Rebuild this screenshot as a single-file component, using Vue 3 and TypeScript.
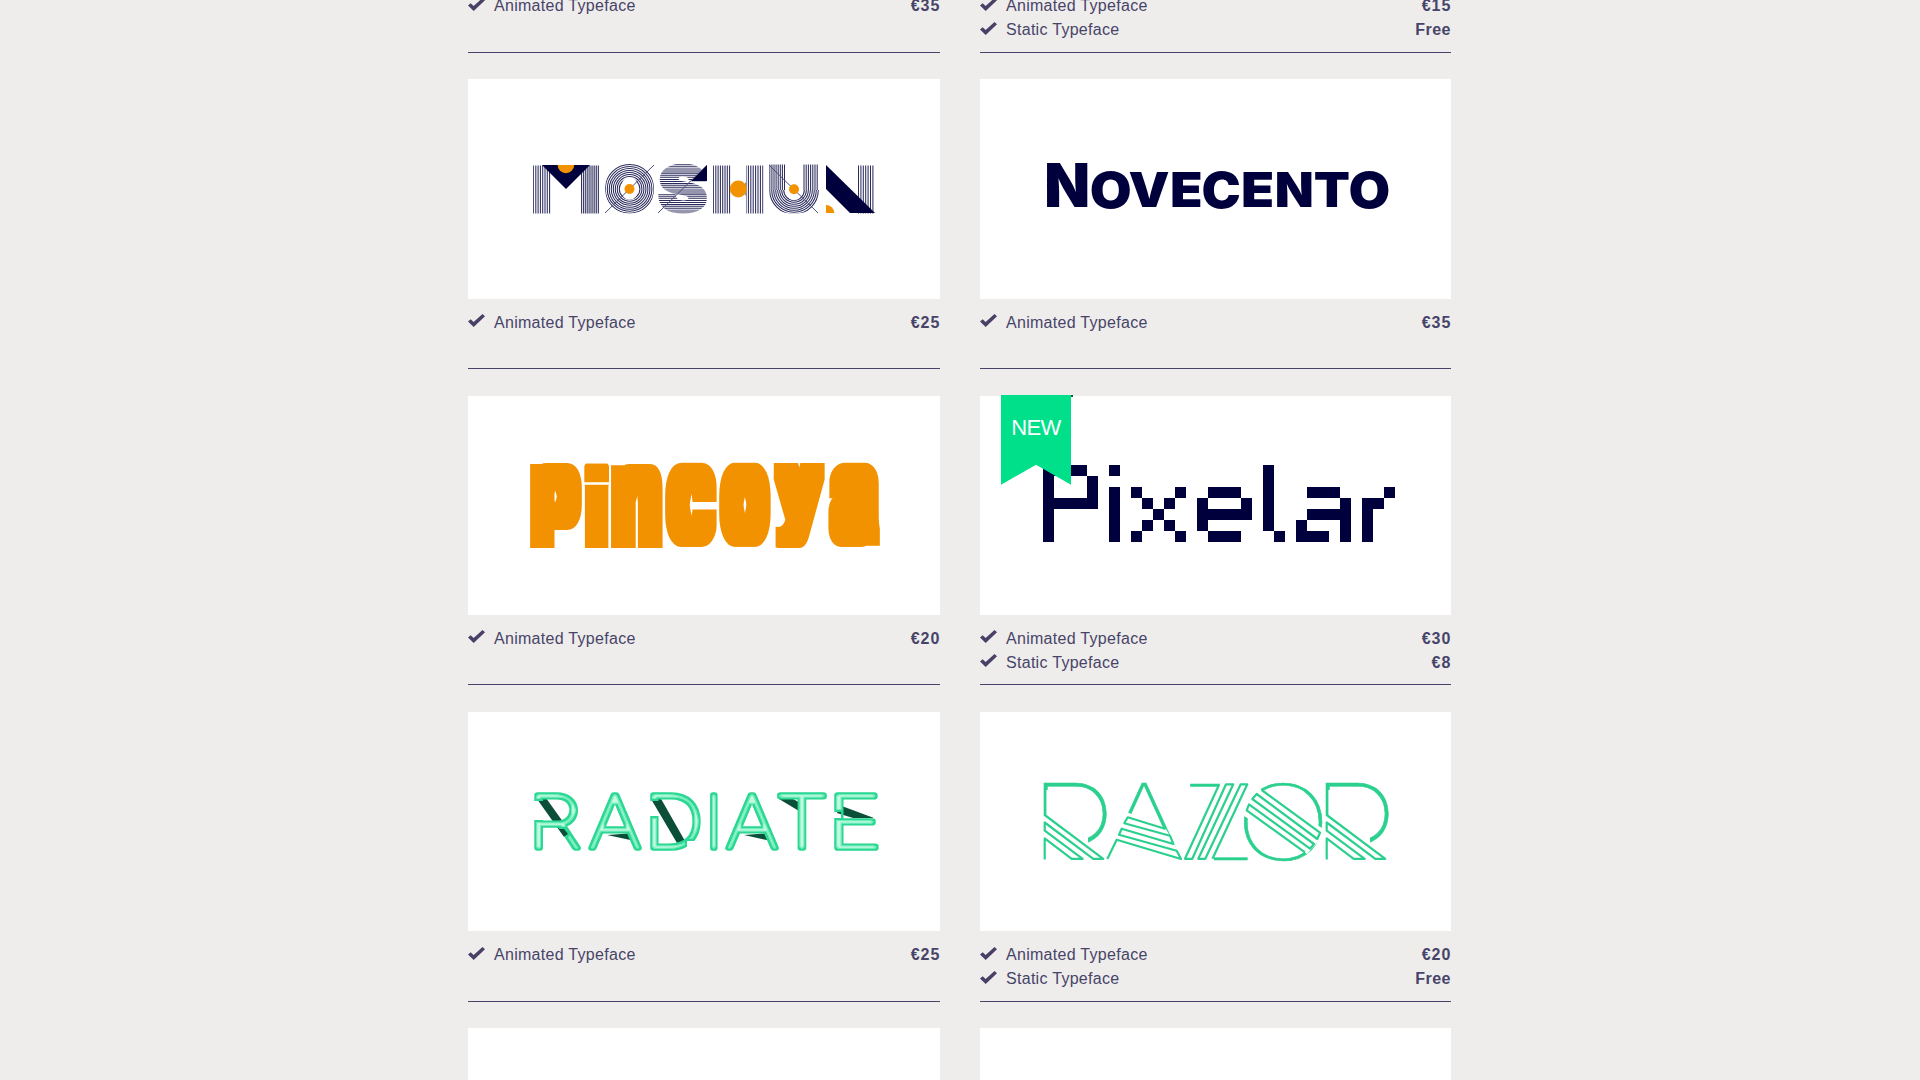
<script setup lang="ts">
interface Offer { label: string; price: string }
interface Card { id: string; name: string; view: string; isNew?: boolean; offers: Offer[] }
interface Glyph { ch: string; x: number; y: number; w: number; h: number }
interface Fitted { ch: string; transform: string; x: number; style: Record<string, string> }

const animated = (price: string): Offer => ({ label: 'Animated Typeface', price })
const still = (price: string): Offer => ({ label: 'Static Typeface', price })

const cards: Card[] = [
  { id: 'a', name: '', view: '', offers: [animated('€35')] },
  { id: 'b', name: '', view: '', offers: [animated('€15'), still('Free')] },
  { id: 'moshun', name: 'Moshun', view: '468 79 472 220', offers: [animated('€25')] },
  { id: 'novecento', name: 'Novecento', view: '980 79 472 220', offers: [animated('€35')] },
  { id: 'pincoya', name: 'Pincoya', view: '468 396 472 220', offers: [animated('€20')] },
  { id: 'pixelar', name: 'Pixelar', view: '980 396 472 220', isNew: true, offers: [animated('€30'), still('€8')] },
  { id: 'radiate', name: 'Radiate', view: '468 712 472 220', offers: [animated('€25')] },
  { id: 'razor', name: 'Razor', view: '980 712 472 220', offers: [animated('€20'), still('Free')] },
  { id: 'c', name: '', view: '', offers: [] },
  { id: 'd', name: '', view: '', offers: [] },
]

const ctx = document.createElement('canvas').getContext('2d')!

// Sizes one character so that its ink, stroke included, fills the given box.
function fit(g: Glyph, family: string, weight: number, stroke = 0): Fitted {
  ctx.font = `${weight} 200px "${family}"`
  const m = ctx.measureText(g.ch)
  const tall = m.actualBoundingBoxAscent + m.actualBoundingBoxDescent
  const k = (g.h - stroke) / tall
  const ink = (m.actualBoundingBoxLeft + m.actualBoundingBoxRight) * k
  const sx = g.w / (ink + stroke)
  const baseline = g.y + stroke / 2 + m.actualBoundingBoxAscent * k
  return {
    ch: g.ch,
    transform: `translate(${g.x} ${baseline}) scale(${sx} 1)`,
    x: m.actualBoundingBoxLeft * k + stroke / 2,
    style: { fontFamily: `"${family}", sans-serif`, fontWeight: String(weight), fontSize: `${200 * k}px` },
  }
}

function word(chars: string, y: number, h: number, spans: number[][], font: string, weight: number, stroke = 0): Fitted[] {
  return [...chars].map((ch, i) => {
    const [x0, x1, y0 = y, h0 = h] = spans[i]
    return fit({ ch, x: x0, y: y0, w: x1 - x0, h: h0 }, font, weight, stroke)
  })
}

const moshun = word('MOSHUN', 164.7, 48.3,
  [[533, 599], [605, 654.3, 164, 49.6], [658, 707, 164, 49], [713, 763.7], [769, 819], [826, 875]], 'Inter', 900, 3)

const novecento = word('NOVECENTO', 172, 35.3,
  [[1047, 1087.5, 163.2, 44.2], [1091.3, 1130, 171, 37.3], [1129.5, 1168.5], [1172.3, 1200.5], [1203, 1239.3, 171, 37.3],
    [1243.3, 1272], [1277, 1311.5], [1315, 1348.5], [1350, 1388.5, 171, 37.3]], 'Inter', 900)

// The boxes leave room for the 10 by 8 spread that the "fatten" filter adds.
const pincoya = word('pincoya', 471, 68.5,
  [[540, 572], [594, 599], [621, 653], [675, 707], [729, 761], [783.5, 815], [838, 870]], 'Roboto', 300)

const pixelar: Fitted[] = [
  fit({ ch: 'P', x: 1042, y: 458, w: 55, h: 84 }, 'Liberation Sans', 700),
  fit({ ch: 'i', x: 1108, y: 465, w: 11, h: 77 }, 'Liberation Sans', 700),
  fit({ ch: 'x', x: 1130, y: 487, w: 55, h: 55 }, 'Liberation Sans', 400),
  fit({ ch: 'e', x: 1196, y: 487, w: 55, h: 55 }, 'Inter', 600),
  fit({ ch: 'l', x: 1251, y: 465, w: 33, h: 77 }, 'DejaVu Sans Mono', 700),
  fit({ ch: 'a', x: 1295, y: 487, w: 55, h: 55 }, 'Inter', 600),
  fit({ ch: 'r', x: 1361, y: 487, w: 33, h: 55 }, 'Liberation Sans', 700),
]

const radiate = word('RADIATE', 792, 59,
  [[534, 581], [588, 642], [650, 701], [710, 718], [725, 779], [777, 827], [834, 879]], 'Inter', 100, 5.6)

const razor: Fitted[] = [
  fit({ ch: 'R', x: 1043.5, y: 783.3, w: 68, h: 107 }, 'Inter', 100),
  fit({ ch: 'A', x: 1106.5, y: 783, w: 75, h: 77 }, 'Inter', 100),
  fit({ ch: 'Z', x: 1190, y: 783.3, w: 57.5, h: 76.4 }, 'Inter', 100),
  fit({ ch: 'O', x: 1244, y: 782.3, w: 78, h: 78.3 }, 'Inter', 100),
  fit({ ch: 'R', x: 1325.5, y: 783.3, w: 68, h: 107 }, 'Inter', 100),
]

const art: Record<string, Fitted[]> = { novecento }

const range = (from: number, to: number, step: number): number[] => {
  const out: number[] = []
  for (let v = from; v <= to; v += step) out.push(v)
  return out
}
const uprights = [...range(533.5, 550, 2.3), ...range(581.5, 599, 1.9), ...range(713.5, 731, 2.3), ...range(746, 764, 2.4), ...range(858.5, 875, 2.4)]
const bends = [...range(769.8, 785, 2.1), ...range(804, 819, 2.2)]
const rings = range(10.3, 24.3, 2)
const bars = range(164.7, 213, 2.1)
</script>

<template>
  <main class="shop">
    <div class="grid">
      <article v-for="card in cards" :key="card.id" class="card">
        <div class="cover">
          <svg v-if="card.view" class="art" :class="card.id" :viewBox="card.view" role="img" :aria-label="card.name">
            <template v-if="card.id === 'moshun'">
              <defs>
                <mask id="lines" maskUnits="userSpaceOnUse" x="525" y="160" width="360" height="60">
                  <g fill="none" stroke="#d4d4d4" stroke-width="1.05">
                    <path v-for="x in uprights" :key="x" :d="`M${x} 164V214`" />
                    <path v-for="x in bends" :key="x" :d="`M${x} 164V190`" />
                    <circle v-for="r in rings" :key="r" cx="629.6" cy="188.9" :r="r" />
                    <path v-for="r in rings" :key="r" :d="`M${794 - r} 190a${r} ${r} 0 0 0 ${2 * r} 0`" />
                    <path v-for="y in bars" :key="y" :d="`M657 ${y}H708`" />
                  </g>
                </mask>
              </defs>
              <g mask="url(#lines)">
                <text v-for="(g, i) in moshun" :key="i" :transform="g.transform" :x="g.x" :style="g.style">{{ g.ch }}</text>
              </g>
              <path d="M542 165H590L566 189Z" />
              <path d="M707 165V181H691Z" />
              <path d="M826 165L875 213H850L826 189Z" />
              <path class="hair" d="M605 213L654 165M658 213L707 165M769 165L818 213" />
              <g class="dots">
                <path d="M557.6 165a8.3 8.3 0 0 0 16.6 0Z" />
                <circle cx="629.5" cy="189" r="5" />
                <circle cx="738.3" cy="189" r="8.4" />
                <circle cx="794" cy="189.3" r="5" />
                <path d="M826 205a8.3 8.3 0 0 1 8.3 8H826Z" />
              </g>
            </template>

            <template v-else-if="card.id === 'pincoya'">
              <defs>
                <filter id="fatten" filterUnits="userSpaceOnUse" x="520" y="455" width="370" height="100">
                  <feMorphology operator="dilate" radius="10 8" />
                </filter>
              </defs>
              <g filter="url(#fatten)">
                <text v-for="(g, i) in pincoya" :key="i" :transform="g.transform" :x="g.x" :style="g.style">{{ g.ch }}</text>
              </g>
              <path class="slit" d="M583 483.5H610" />
            </template>

            <template v-else-if="card.id === 'pixelar'">
              <defs>
                <filter id="mosaic" filterUnits="userSpaceOnUse" x="1031" y="454" width="374" height="99" color-interpolation-filters="sRGB">
                  <feFlood x="1036" y="459" width="1" height="1" flood-color="#000" />
                  <feOffset x="1031" y="454" width="11" height="11" dx="0" dy="0" />
                  <feTile result="dots" />
                  <feComposite in="SourceGraphic" in2="dots" operator="in" />
                  <feComponentTransfer><feFuncA type="linear" slope="20" intercept="-6" /></feComponentTransfer>
                  <feMorphology operator="dilate" radius="5" />
                </filter>
                <mask id="trim" maskUnits="userSpaceOnUse" x="1020" y="440" width="400" height="130">
                  <path fill="#fff" d="M1020 465H1420V570H1020Z" />
                  <path fill="#000" d="M1086 454h11v22h-11ZM1251 454h11v33h-11ZM1262 531h11v11h-11ZM1295 498h11v11h-11ZM1361 487h11v11h-11Z" />
                </mask>
              </defs>
              <g transform="translate(1 0)" filter="url(#mosaic)"><g mask="url(#trim)">
                <text v-for="(g, i) in pixelar" :key="i" :transform="g.transform" :x="g.x" :style="g.style">{{ g.ch }}</text>
              </g></g>
            </template>

            <template v-else-if="card.id === 'radiate'">
              <defs>
                <filter id="tube" filterUnits="userSpaceOnUse" x="525" y="785" width="365" height="75" color-interpolation-filters="sRGB">
                  <feMorphology in="SourceAlpha" operator="erode" radius="2" result="body" />
                  <feFlood flood-color="#74edba" />
                  <feComposite in2="body" operator="in" />
                  <feGaussianBlur stdDeviation="0.5" result="mid" />
                  <feMorphology in="SourceAlpha" operator="erode" radius="3" result="core" />
                  <feFlood flood-color="#c4fae4" />
                  <feComposite in2="core" operator="in" />
                  <feGaussianBlur stdDeviation="0.5" result="shine" />
                  <feMerge>
                    <feMergeNode in="SourceGraphic" />
                    <feMergeNode in="mid" />
                    <feMergeNode in="mid" />
                    <feMergeNode in="shine" />
                  </feMerge>
                </filter>
                <mask id="gaps" maskUnits="userSpaceOnUse" x="520" y="780" width="380" height="90">
                  <path fill="#fff" d="M520 780H900V870H520Z" />
                  <path fill="#000" d="M532 801h11v19h-11ZM559 829L564 829L568 834L562 838ZM649 801h10v15h-10ZM687 841H697V852H687ZM832 812h9v6h-9Z" />
                </mask>
              </defs>
              <path class="fold" d="M537 799L546 798L571 833L564 837ZM607 835L635 833L635 841ZM651 799L660 797L685 841L677 843ZM744 835L771 833L771 841ZM779 799H793L806 806L799 811ZM839 805L874 818H853L837 813Z" />
              <g filter="url(#tube)"><g mask="url(#gaps)">
                <text v-for="(g, i) in radiate" :key="i" :transform="g.transform" :x="g.x" :style="g.style">{{ g.ch }}</text>
              </g></g>
            </template>

            <template v-else-if="card.id === 'razor'">
              <text v-for="(g, i) in razor" :key="i" :transform="g.transform" :x="g.x" :style="g.style">{{ g.ch }}</text>
              <g class="blank">
                <path v-for="dx in [0, 282]" :key="dx" :transform="`translate(${dx} 0)`" d="M1046.4 790H1060L1088 837V846L1118 850V894H1042V816H1046.4Z" />
                <path d="M1129 813L1166 829L1184 862H1104L1126 812Z" />
                <path d="M1220 780H1250V787L1214 857V862H1180L1219 787Z" />
                <path d="M1261.7 790.5L1322 828L1326 833L1307 854L1304 852L1244 816L1240 812L1258 784Z" />
              </g>
              <g class="stripes">
                <path v-for="dx in [0, 282]" :key="dx" :transform="`translate(${dx} 0)`" d="M1044.7 815L1103.3 858.8H1093.3L1044.7 822.5V830.7L1082.7 858.8H1071.7L1044.7 838.3V859.5" />
                <path d="M1165.7 829L1127.7 817.3L1124.3 823.3L1170 835.7L1173.3 844L1121.7 828.7L1119 834.7L1176.7 850.7L1181 859L1116.7 839.7L1107.3 859" />
                <path d="M1219.3 784.3L1185 858.8H1192.3L1226 784.3H1233.3L1198.3 858.8H1205.3L1240.7 784.3H1247.3L1212.5 858.8" />
                <path d="M1261.7 790L1320 832.7L1317.3 839L1256.7 794L1252.3 799L1314 844L1310 848.7L1249 804.3L1246.7 810.3L1305 852.3" />
              </g>
            </template>

            <template v-else>
              <text v-for="(g, i) in art[card.id]" :key="i" :transform="g.transform" :x="g.x" :style="g.style">{{ g.ch }}</text>
            </template>
          </svg>
          <div v-if="card.isNew" class="ribbon">NEW</div>
          <i v-if="card.isNew" class="tuck"></i>
        </div>
        <ul class="offers">
          <li v-for="offer in card.offers" :key="offer.label" class="offer">
            <svg class="check" viewBox="0 0 17 13"><path d="M0 7.6L2.7 5.2L5.6 8L14.5 0L17 2.3L5.7 13Z" /></svg>
            <span>{{ offer.label }}</span>
            <b :class="{ sum: offer.price !== 'Free' }">{{ offer.price }}</b>
          </li>
        </ul>
      </article>
    </div>
  </main>
</template>

<style>
body { margin: 0; background: #eeedeb; }
</style>

<style scoped>
.shop {
  height: 1080px;
  overflow: hidden;
  background: #eeedeb;
  color: #474469;
  font: 16px/24px "Liberation Sans", Arial, sans-serif;
  letter-spacing: 0.5px;
}
.grid {
  display: grid;
  grid-template-columns: 472px 471px;
  grid-auto-rows: 316.333px;
  column-gap: 40px;
  width: 983px;
  margin: -237px 0 0 468px;
}
.card { display: flex; flex-direction: column; min-width: 0; }
.cover { position: relative; flex: none; height: 219.33px; background: #fff; }
.art { display: block; width: 472px; height: 220px; margin-right: -1px; fill: #00003c; letter-spacing: 0; clip-path: inset(0 1px 1px 0); }
.offers {
  box-sizing: border-box;
  list-style: none;
  margin: 0;
  padding: 12px 0 0;
  height: 70.33px;
  border-bottom: 1px solid #474469;
}
.offer { display: flex; height: 24px; }
.offer span { flex: 1; letter-spacing: 0.29px; }
.check { width: 17px; height: 13px; margin: 3.4px 9px 0 0; fill: #4a4066; }
.sum { letter-spacing: 1px; margin-right: -0.4px; }
.ribbon {
  position: absolute;
  left: 21px;
  top: -1px;
  width: 70px;
  height: 90px;
  box-sizing: border-box;
  padding: 20px 0 0;
  text-align: center;
  font-size: 22px;
  line-height: 25px;
  letter-spacing: -0.6px;
  color: #fff;
  background: #00df8a;
  clip-path: polygon(0 0, 100% 0, 100% 100%, 50% 78%, 0 100%);
}
.tuck { position: absolute; left: 91px; top: -1px; width: 2px; height: 2px; background: #06603f; }
.hair { fill: none; stroke: #4d4d78; stroke-width: 1; }
.dots { fill: #f39200; }
.moshun text { stroke: #00003c; stroke-width: 3px; }
.pincoya text { fill: #f39200; }
.slit { fill: none; stroke: #fff; stroke-width: 2.4px; }
.radiate text { fill: #2bd793; stroke: #2bd793; stroke-width: 5.6px; stroke-linejoin: round; }
.fold { fill: #0c4f38; }
.razor text { fill: #2bd08e; stroke: #2bd08e; stroke-width: 0.5px; }
.blank { fill: #fff; }
.stripes { fill: none; stroke: #2bd08e; stroke-width: 2.2px; stroke-linejoin: round; }
</style>
